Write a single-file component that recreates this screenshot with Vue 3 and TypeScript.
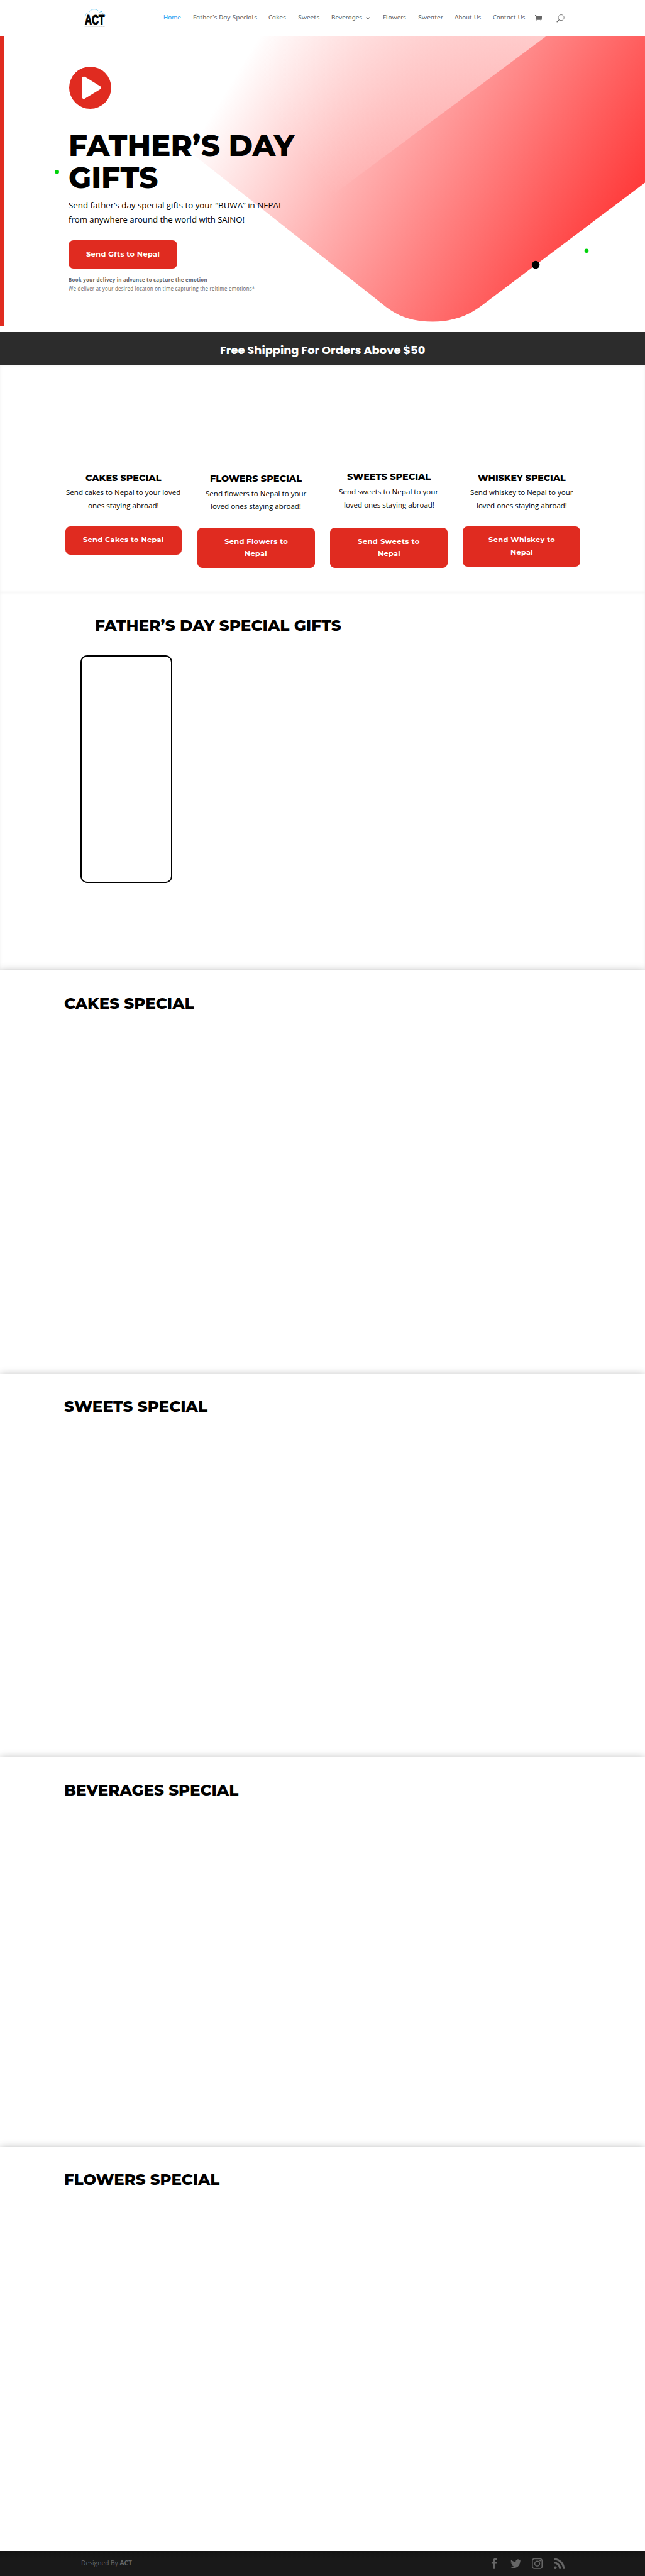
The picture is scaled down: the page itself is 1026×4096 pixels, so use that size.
<script setup lang="ts">
import type { Directive } from 'vue'

// Stretches a single line of text so that it takes exactly the given width.
const vFit: Directive<HTMLElement, number> = {
  mounted(el, { value }) {
    requestAnimationFrame(() => {
      const page = document.querySelector('.page') as HTMLElement
      const unit = page.getBoundingClientRect().width / 1440
      const natural = el.getBoundingClientRect().width / unit
      el.style.transform = `scaleX(${value / natural})`
      el.style.marginRight = `${value - natural}px`
    })
  },
}

interface Line { text: string; w: number }
interface Card { title: Line; lines: Line[]; button: Line[]; cls: string }

const menu = [
  { text: 'Home', w: 39, active: true },
  { text: 'Father’s Day Specials', w: 143 },
  { text: 'Cakes', w: 39 },
  { text: 'Sweets', w: 48 },
  { text: 'Beverages', w: 69, sub: true },
  { text: 'Flowers', w: 51.5 },
  { text: 'Sweater', w: 56 },
  { text: 'About Us', w: 59 },
  { text: 'Contact Us', w: 72 },
]

const cards: Card[] = [
  {
    cls: 'cakes',
    title: { text: 'CAKES SPECIAL', w: 169 },
    lines: [{ text: 'Send cakes to Nepal to your loved', w: 256 }, { text: 'ones staying abroad!', w: 158 }],
    button: [{ text: 'Send Cakes to Nepal', w: 180.5 }],
  },
  {
    cls: 'flowers',
    title: { text: 'FLOWERS SPECIAL', w: 205 },
    lines: [{ text: 'Send flowers to Nepal to your', w: 225 }, { text: 'loved ones staying abroad!', w: 202 }],
    button: [{ text: 'Send Flowers to', w: 142 }, { text: 'Nepal', w: 50.5 }],
  },
  {
    cls: 'sweets',
    title: { text: 'SWEETS SPECIAL', w: 187 },
    lines: [{ text: 'Send sweets to Nepal to your', w: 222 }, { text: 'loved ones staying abroad!', w: 202 }],
    button: [{ text: 'Send Sweets to', w: 138.5 }, { text: 'Nepal', w: 50.5 }],
  },
  {
    cls: 'whiskey',
    title: { text: 'WHISKEY SPECIAL', w: 196 },
    lines: [{ text: 'Send whiskey to Nepal to your', w: 229.5 }, { text: 'loved ones staying abroad!', w: 202 }],
    button: [{ text: 'Send Whiskey to', w: 149 }, { text: 'Nepal', w: 50.5 }],
  },
]

const sections = [
  { title: 'CAKES SPECIAL', w: 290, h: 900 },
  { title: 'SWEETS SPECIAL', w: 320, h: 855 },
  { title: 'BEVERAGES SPECIAL', w: 389, h: 870 },
  { title: 'FLOWERS SPECIAL', w: 347, h: 903.5 },
]
</script>

<template>
  <div class="page">
    <header class="header">
      <svg class="logo" viewBox="0 0 50 42" width="50" height="42">
        <path d="M3 16C3 11 6 9 10 9C12 4 17 1 22 1C28 1 32 4 34 8C40 8 43 12 45 13.500C47 14 48 15 48 16" fill="none" stroke="#6cc8ef" stroke-width="1" />
        <circle cx="37.500" cy="5.500" r="1.700" fill="#28b1ee" />
        <text x="1.500" y="35" textLength="44" lengthAdjust="spacingAndGlyphs" font-size="30" class="logo-text">ACT</text>
        <path d="M1 39.200H46" stroke="#999" stroke-width="1.300" stroke-dasharray="2 .6 1 .5" />
      </svg>
      <nav class="nav">
        <a v-for="m in menu" :key="m.text" :class="{ active: m.active, sub: m.sub }">
          <span v-fit="m.w" class="fit">{{ m.text }}</span>
          <svg v-if="m.sub" class="chev" viewBox="0 0 9 6" width="9" height="6"><path d="M.8 .8L4.500 4.700L8.200 .8" fill="none" stroke="#666" stroke-width="1.500" /></svg>
        </a>
      </nav>
      <svg class="cart" viewBox="0 0 16 14" width="16" height="14">
        <path d="M0 0H2.800L3.200 1.800H16L15.200 8.600H3.600V9.800H15V11H2.400V8.500L1.700 1.300H0Z" fill="#666" />
        <rect x="3" y="12" width="2" height="2" fill="#666" /><rect x="12" y="12" width="2" height="2" fill="#666" />
      </svg>
      <svg class="search" viewBox="0 0 18 18" width="18" height="18">
        <circle cx="10.700" cy="7.200" r="6.500" fill="none" stroke="#666" stroke-width="1.200" />
        <path d="M6.400 12L.9 17.200" stroke="#666" stroke-width="1.800" />
      </svg>
    </header>

    <section class="hero">
      <svg class="shape" viewBox="0 80 1440 661" width="1440" height="661">
        <defs>
          <linearGradient id="base" gradientUnits="userSpaceOnUse" x1="456.700" y1="280.300" x2="1219.200" y2="748.400">
            <stop offset="0" stop-color="#fff" />
            <stop offset=".39" stop-color="#ffafaf" />
            <stop offset="1" stop-color="#ff3c3c" />
          </linearGradient>
          <linearGradient id="veil" gradientUnits="userSpaceOnUse" x1="740" y1="440" x2="1211" y2="86.600">
            <stop offset="0" stop-color="#fff" stop-opacity="0" />
            <stop offset="1" stop-color="#fff" stop-opacity=".57" />
          </linearGradient>
        </defs>
        <path d="M1440 80V407.700L1078 680C1045 706 1008 718 966 718C922 718 885 706 853 678L400 320L560 80Z" fill="url(#base)" />
        <path d="M1220.500 80L720 452L600 541L400 320L560 80Z" fill="url(#veil)" />
        <circle cx="1196" cy="591" r="8.800" fill="#000" />
        <circle cx="1309.500" cy="559.800" r="4.600" fill="#00d20a" />
        <circle cx="127.300" cy="383.500" r="4.600" fill="#00d20a" />
      </svg>
      <div class="hero-body">
        <svg class="play" viewBox="0 0 94 94" width="94" height="94">
          <circle cx="47" cy="47" r="47" fill="#e02b20" />
          <path d="M33 26L67 47L33 68Z" fill="#fff" stroke="#fff" stroke-width="8" stroke-linejoin="round" />
        </svg>
        <h1>
          <span v-fit="504" class="fit">FATHER’S DAY</span><br />
          <span v-fit="200" class="fit">GIFTS</span>
        </h1>
        <p class="lead">
          <span v-fit="478.500" class="fit">Send father’s day special gifts to your “BUWA” in NEPAL</span><br />
          <span v-fit="393" class="fit">from anywhere around the world with SAINO!</span>
        </p>
        <a class="btn hero-btn"><span v-fit="164.500" class="fit">Send Gfts to Nepal</span></a>
        <p class="note">
          <b><span v-fit="310" class="fit">Book your delivey in advance to capture the emotion</span></b><br />
          <span v-fit="416" class="fit">We deliver at your desired locaton on time capturing the reltime emotions*</span>
        </p>
      </div>
    </section>

    <div class="banner"><span v-fit="458" class="fit">Free Shipping For Orders Above $50</span></div>

    <section class="cards">
      <article v-for="c in cards" :key="c.cls" class="card" :class="c.cls">
        <h4><span v-fit="c.title.w" class="fit">{{ c.title.text }}</span></h4>
        <p><span v-for="l in c.lines" :key="l.text" class="row"><span v-fit="l.w" class="fit">{{ l.text }}</span></span></p>
        <a class="btn"><span v-for="l in c.button" :key="l.text" class="row"><span v-fit="l.w" class="fit">{{ l.text }}</span></span></a>
      </article>
    </section>

    <section class="gifts">
      <h2><span v-fit="550" class="fit">FATHER’S DAY SPECIAL GIFTS</span></h2>
      <div class="frame"></div>
    </section>

    <section v-for="s in sections" :key="s.title" class="special" :style="{ height: s.h + 'px' }">
      <h2><span v-fit="s.w" class="fit">{{ s.title }}</span></h2>
    </section>

    <footer class="footer">
      <p><span v-fit="113.500" class="fit">Designed By <b>ACT</b></span></p>
      <div class="social">
        <svg viewBox="0 0 24 26" width="24" height="26"><path d="M9 25V13.500H5.500V8.500H9V6.500C9 2.500 11 .8 14.500 .8H17.500V5H15.400C14.200 5 13.800 5.500 13.800 6.700V8.500H17.500L17 13.500H13.800V25Z" /></svg>
        <svg viewBox="0 0 24 26" width="24" height="26"><path transform="translate(0 1)" d="M23.950 4.570a10 10 0 0 1-2.820.77 4.960 4.960 0 0 0 2.160-2.720c-.95.550-2 .95-3.120 1.180a4.920 4.920 0 0 0-8.380 4.480C7.690 8.100 4.070 6.130 1.640 3.160a4.820 4.820 0 0 0-.67 2.470c0 1.710.87 3.210 2.190 4.100a4.900 4.900 0 0 1-2.230-.62v.060a4.920 4.920 0 0 0 3.950 4.830 5 5 0 0 1-2.210.080 4.940 4.940 0 0 0 4.600 3.420A9.870 9.870 0 0 1 0 19.540a14 14 0 0 0 7.550 2.210c9.050 0 14-7.500 14-13.990 0-.21 0-.42-.020-.63a9.940 9.940 0 0 0 2.460-2.550z" /></svg>
        <svg viewBox="0 0 24 26" width="24" height="26"><g fill="none" stroke="#666" stroke-width="2.200"><rect x="1.200" y="2.200" width="21.600" height="21.600" rx="4.500" /><circle cx="12" cy="13" r="5.500" /></g><rect x="17" y="5" width="3" height="2.600" /></svg>
        <svg viewBox="0 0 24 26" width="24" height="26"><circle cx="3.200" cy="22" r="3.200" /><path d="M0 2.700A22 22 0 0 1 22 25M0 11A14 14 0 0 1 14 25" fill="none" stroke="#666" stroke-width="4.300" /></svg>
      </div>
    </footer>
  </div>
</template>

<style>
body { margin: 0; background: #fff; }
</style>

<style scoped>
.page { zoom: 0.7125; width: 1440px; height: 5749px; overflow: hidden; position: relative; background: #fff; font-family: "Open Sans", "Noto Sans", sans-serif; color: #666; }
.page * { box-sizing: border-box; }
h1, h2, h4, p { margin: 0; }
svg { display: block; flex: none; }
.fit { display: inline-block; white-space: nowrap; transform-origin: 0 50%; }
.nav .fit, h1 .fit, h2 .fit, h4 .fit, .lead .fit, .banner .fit { translate: 0 .8px; }
.row { display: block; }

.header { height: 80px; display: flex; align-items: flex-start; padding-left: 187.500px; position: relative; z-index: 3; background: #fff; box-shadow: 0 1px 0 rgba(0, 0, 0, .1); }
.logo { margin-top: 19.500px; overflow: visible; }
.logo-text { font-family: "Liberation Sans", sans-serif; font-weight: 700; fill: #000; stroke: #000; stroke-width: 1.400; }
.nav { display: flex; gap: 26.300px; margin-left: 127.500px; margin-top: 25px; font-family: ABeeZee, "Open Sans", sans-serif; font-size: 14px; line-height: 28px; font-weight: 600; }
.nav a { display: flex; align-items: center; }
.nav .active { color: #2ea3f2; }
.chev { margin: 3px 2.500px 0 9px; }
.cart { margin: 34px 0 0 22px; }
.search { margin: 32.500px 0 0 31.500px; }

.hero { position: relative; height: 661px; }
.hero::before { content: ""; position: absolute; left: 0; top: 0; width: 10px; height: 647px; background: #e02b20; }
.shape { position: absolute; left: 0; top: 0; }
.hero-body { position: relative; padding: 68.500px 0 0 153px; }
.play { margin-left: 1px; }
h1, h2, h4 { font-family: Montserrat, Inter, sans-serif; font-weight: 800; color: #000; }
h1 { font-size: 65px; line-height: 71px; margin-top: 47px; }
.lead { font-size: 18.300px; line-height: 32.800px; color: #000; margin-top: 9px; }
.btn { display: block; background: #e02b20; color: #fff; font-family: Montserrat, "Open Sans", sans-serif; font-weight: 700; font-size: 16px; letter-spacing: .5px; line-height: 27px; padding: 18px 0; border-radius: 11px; text-align: center; }
.hero-btn { width: 243px; margin-top: 30px; }
.note { font-size: 11.700px; line-height: 20px; margin-top: 16px; letter-spacing: .4px; }

.banner { height: 74px; background: #2c2c2c; color: #fff; text-align: center; font-family: Poppins, Inter, sans-serif; font-weight: 700; font-size: 24px; line-height: 30px; padding-top: 25px; }

.cards { height: 507.500px; display: flex; gap: 34.300px; padding: 240px 0 0 144.500px; box-shadow: inset 0 0 8px rgba(0, 0, 0, .06); }
.card { width: 262px; text-align: center; }
.card h4 { font-size: 20px; line-height: 20px; }
.card p { font-size: 16px; line-height: 28.900px; color: #000; margin: 10.500px 0 31px; }
.cakes .btn { width: 259px; margin-left: 1.500px; }
.flowers { padding-top: 2px; }
.flowers p { margin-bottom: 32px; }
.sweets { margin-top: -2px; }
.sweets p { margin-bottom: 36px; }

.gifts { height: 843.500px; padding-top: 54px; box-shadow: inset 0 0 8px rgba(0, 0, 0, .06); }
h2 { font-size: 34px; line-height: 36px; }
.gifts h2 { padding-left: 212px; }
.frame { width: 204px; height: 508px; margin: 50px 0 0 180px; border: 3px solid #000; border-radius: 15px; }

.special { position: relative; background: #fff; box-shadow: 0 2px 18px rgba(0, 0, 0, .3); padding: 54.500px 0 0 143.500px; }

.footer { position: relative; height: 56px; background: linear-gradient(#141414, #191919 16px); display: flex; justify-content: space-between; padding: 0 180px 0 180.500px; }
.footer p { font-size: 14px; line-height: 24px; padding-top: 14px; }
.social { display: flex; gap: 24px; padding-top: 13px; fill: #666; }
</style>
